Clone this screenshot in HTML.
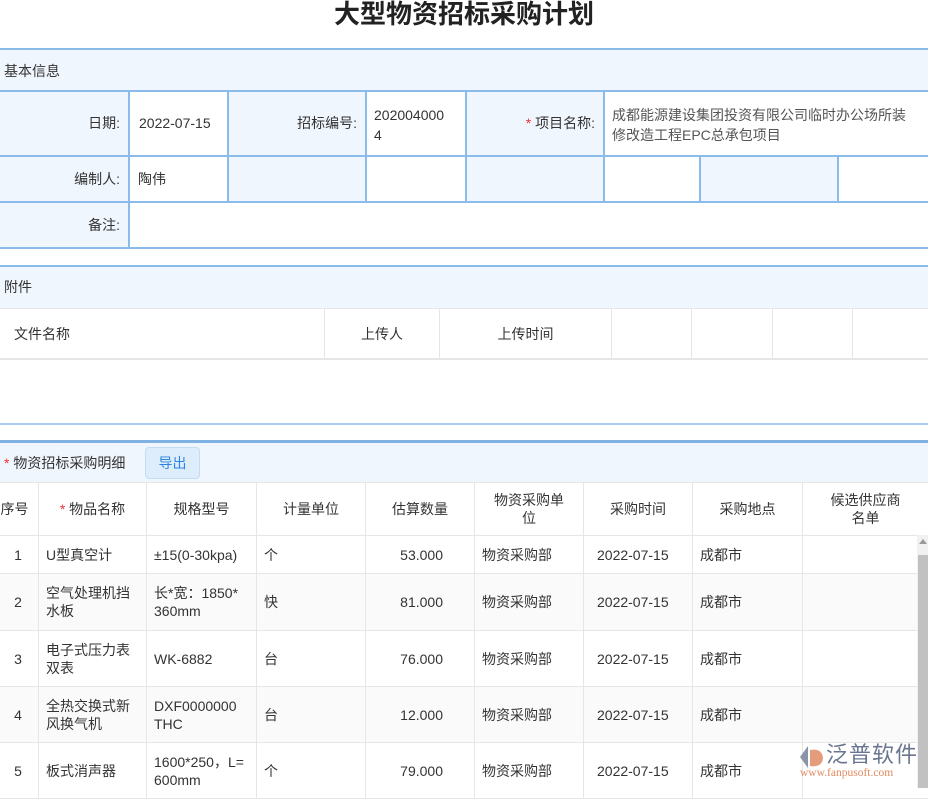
<!DOCTYPE html>
<html><head><meta charset="utf-8"><style>
*{margin:0;padding:0;box-sizing:border-box}
body{width:928px;height:788px;overflow:hidden;background:#fff;font-family:"Liberation Sans","Noto Sans CJK SC",sans-serif;font-size:14px;color:#333;position:relative}
.a{position:absolute}
.title{left:0;width:928px;top:0;text-align:center;font-size:26px;font-weight:bold;line-height:28px;color:#222}
.sec{left:0;width:928px;background:#f0f6fe;border-top:2px solid #8bbbe8;font-size:14px;padding-left:4px}
.c{position:absolute;border-right:2px solid #8bbbe8;border-bottom:2px solid #8bbbe8}
.l{background:#f0f6fe;text-align:right;padding-right:8px}
.r{color:#e33}
table{border-collapse:collapse;table-layout:fixed}
td{border:1px solid #e6e6e6;padding:0 7px;line-height:18px;vertical-align:middle}
.dt th{border:1px solid #e6e6e6;font-weight:normal;line-height:18px}
.dt tr.g td{background:#fafafa}
.num{text-align:right;padding-right:31px}
.dtm{padding-left:13px}
</style></head><body>
<div class="a title">大型物资招标采购计划</div>

<div class="a sec" style="top:48px;height:44px;line-height:42px;border-bottom:2px solid #8bbbe8">基本信息</div>
<div class="c l" style="left:0;top:92px;width:130px;height:65px;line-height:63px">日期:</div>
<div class="c" style="left:130px;top:92px;width:99px;height:65px;padding:22px 0 0 9px;line-height:18px">2022-07-15</div>
<div class="c l" style="left:229px;top:92px;width:138px;height:65px;line-height:63px">招标编号:</div>
<div class="c" style="left:367px;top:92px;width:100px;height:65px;padding:13px 0 0 7px;line-height:20px">202004000<br>4</div>
<div class="c l" style="left:467px;top:92px;width:138px;height:65px;line-height:63px"><span class="r">*</span> 项目名称:</div>
<div class="c" style="left:605px;top:92px;width:330px;height:65px;padding:13px 0 0 7px;line-height:20px;color:#555">成都能源建设集团投资有限公司临时办公场所装<br>修改造工程EPC总承包项目</div>
<div class="c l" style="left:0;top:157px;width:130px;height:46px;line-height:44px">编制人:</div>
<div class="c" style="left:130px;top:157px;width:99px;height:46px;line-height:44px;padding-left:8px">陶伟</div>
<div class="c l" style="left:229px;top:157px;width:138px;height:46px"></div>
<div class="c" style="left:367px;top:157px;width:100px;height:46px"></div>
<div class="c l" style="left:467px;top:157px;width:138px;height:46px"></div>
<div class="c" style="left:605px;top:157px;width:96px;height:46px"></div>
<div class="c l" style="left:701px;top:157px;width:138px;height:46px"></div>
<div class="c" style="left:839px;top:157px;width:100px;height:46px"></div>
<div class="c l" style="left:0;top:203px;width:130px;height:46px;line-height:44px">备注:</div>
<div class="c" style="left:130px;top:203px;width:810px;height:46px"></div>

<div class="a sec" style="top:265px;height:44px;line-height:40px">附件</div>
<div class="a" style="left:0;top:308px;width:928px;height:52px;border-top:1px solid #e6e6e6;border-bottom:2px solid #e6e6e6">
<div class="a" style="left:14px;top:0;line-height:50px">文件名称</div>
<div class="a" style="left:324px;top:0;width:116px;height:50px;border-left:1px solid #e6e6e6;border-right:1px solid #e6e6e6;text-align:center;line-height:50px">上传人</div>
<div class="a" style="left:440px;top:0;width:172px;height:50px;border-right:1px solid #e6e6e6;text-align:center;line-height:50px">上传时间</div>
<div class="a" style="left:612px;top:0;width:80px;height:50px;border-right:1px solid #e6e6e6"></div>
<div class="a" style="left:692px;top:0;width:81px;height:50px;border-right:1px solid #e6e6e6"></div>
<div class="a" style="left:773px;top:0;width:80px;height:50px;border-right:1px solid #e6e6e6"></div>
</div>
<div class="a" style="left:0;top:423px;width:928px;height:2px;background:#a8cdee"></div>

<div class="a sec" style="top:440px;height:43px;border-top:3px solid #7fb2e3;line-height:40px;padding-left:4px"><span class="r">*</span> 物资招标采购明细</div>
<div class="a" style="left:145px;top:447px;width:55px;height:32px;background:#deedfc;border:1px solid #c4dcf3;border-radius:4px;color:#2f86e0;text-align:center;line-height:30px">导出</div>

<table class="a dt" style="left:-10px;top:482px;width:938px">
<colgroup><col style="width:48px"><col style="width:108px"><col style="width:110px"><col style="width:109px"><col style="width:109px"><col style="width:109px"><col style="width:109px"><col style="width:110px"><col style="width:126px"></colgroup>
<tr style="height:53px"><th>序号</th><th><span class="r">*</span> 物品名称</th><th>规格型号</th><th>计量单位</th><th>估算数量</th><th>物资采购单<br>位</th><th>采购时间</th><th>采购地点</th><th>候选供应商<br>名单</th></tr>
<tr style="height:38px"><td style="text-align:center;padding-left:14px">1</td><td>U型真空计</td><td>±15(0-30kpa)</td><td>个</td><td class="num">53.000</td><td>物资采购部</td><td class="dtm">2022-07-15</td><td>成都市</td><td></td></tr>
<tr class="g" style="height:57px"><td style="text-align:center;padding-left:14px">2</td><td>空气处理机挡<br>水板</td><td>长*宽：1850*<br>360mm</td><td>快</td><td class="num">81.000</td><td>物资采购部</td><td class="dtm">2022-07-15</td><td>成都市</td><td></td></tr>
<tr style="height:56px"><td style="text-align:center;padding-left:14px">3</td><td>电子式压力表<br>双表</td><td>WK-6882</td><td>台</td><td class="num">76.000</td><td>物资采购部</td><td class="dtm">2022-07-15</td><td>成都市</td><td></td></tr>
<tr class="g" style="height:56px"><td style="text-align:center;padding-left:14px">4</td><td>全热交换式新<br>风换气机</td><td>DXF0000000<br>THC</td><td>台</td><td class="num">12.000</td><td>物资采购部</td><td class="dtm">2022-07-15</td><td>成都市</td><td></td></tr>
<tr style="height:56px"><td style="text-align:center;padding-left:14px">5</td><td>板式消声器</td><td>1600*250，L=<br>600mm</td><td>个</td><td class="num">79.000</td><td>物资采购部</td><td class="dtm">2022-07-15</td><td>成都市</td><td></td></tr>
</table>
<div class="a" style="left:917px;top:535px;width:11px;height:253px;background:#f1f1f1"></div>
<div class="a" style="left:918px;top:555px;width:10px;height:233px;background:#c1c1c1"></div>
<div class="a" style="left:919px;top:539px;width:0;height:0;border-left:4px solid transparent;border-right:4px solid transparent;border-bottom:5px solid #999"></div>

<div class="a" style="left:798px;top:742px;width:120px;height:40px">
<svg class="a" style="left:0;top:2px" width="28" height="26" viewBox="0 0 28 26"><path d="M10 2 L2 13 L10 24 Z" fill="#8a93a8"/><path d="M12 6 Q24 4 25 14 Q24 24 12 22 Z" fill="#e49d7c"/></svg>
<div class="a" style="left:28px;top:0;font-size:22px;line-height:26px;color:#6a7690;letter-spacing:1px;white-space:nowrap">泛普软件</div>
<div class="a" style="left:2px;top:25px;font-size:11.5px;line-height:12px;color:#e08a60;font-family:'Liberation Serif',serif;white-space:nowrap">www.fanpusoft.com</div>
</div>
</body></html>
